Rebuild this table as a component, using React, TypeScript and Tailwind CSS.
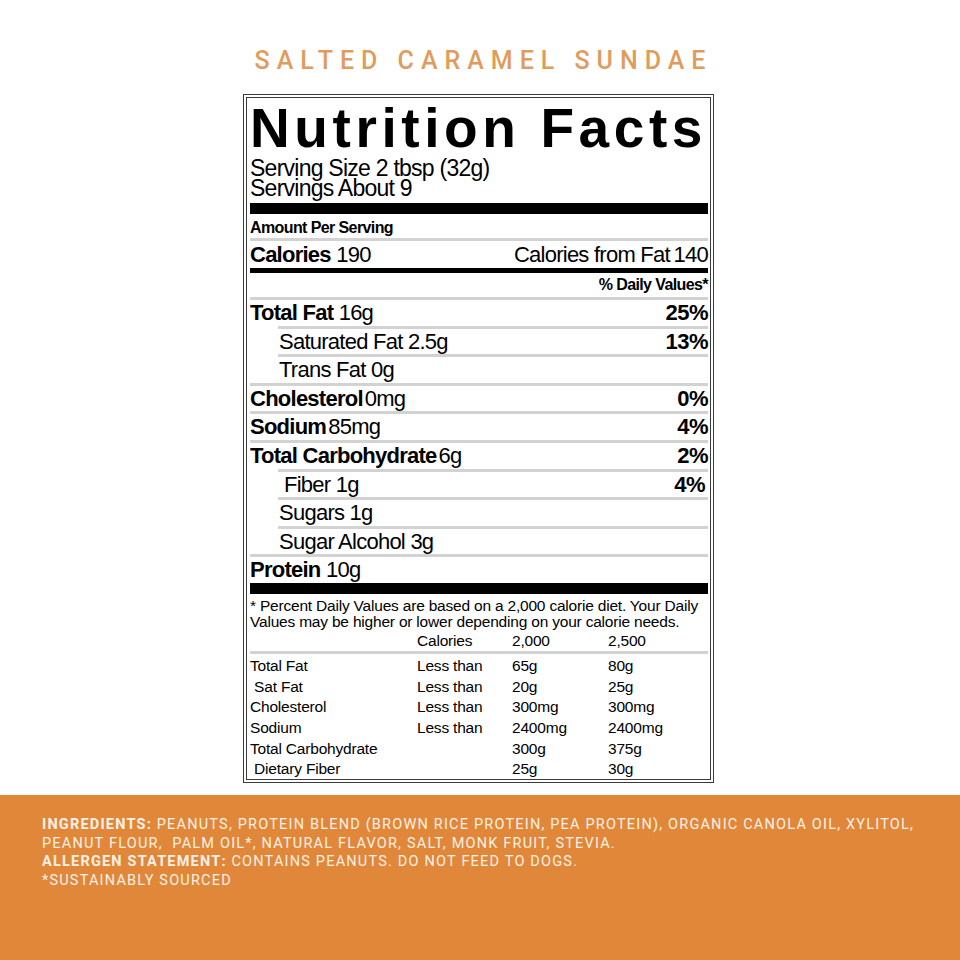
const ARIAL = "font-['Liberation_Sans',Arial,sans-serif]";

type Row = {
  label: string;
  value: string;
  bold?: boolean;
  tight?: boolean;
  indent?: 'sub' | 'fiber';
  pct?: string;
  pctClass?: string;
  lineIndent?: boolean;
};

const rows: Row[] = [
  { label: 'Total Fat', value: '16g', bold: true, pct: '25%', lineIndent: true },
  { label: 'Saturated Fat', value: '2.5g', indent: 'sub', pct: '13%', lineIndent: true },
  { label: 'Trans Fat', value: '0g', indent: 'sub' },
  { label: 'Cholesterol', value: '0mg', bold: true, tight: true, pct: '0%' },
  { label: 'Sodium', value: '85mg', bold: true, tight: true, pct: '4%' },
  { label: 'Total Carbohydrate', value: '6g', bold: true, tight: true, pct: '2%', lineIndent: true },
  { label: 'Fiber', value: '1g', indent: 'fiber', pct: '4%', pctClass: 'pr-[3px]', lineIndent: true },
  { label: 'Sugars', value: '1g', indent: 'sub', lineIndent: true },
  { label: 'Sugar Alcohol', value: '3g', indent: 'sub' },
];

const dv = [
  ['Total Fat', 'Less than', '65g', '80g'],
  ['\u00a0Sat Fat', 'Less than', '20g', '25g'],
  ['Cholesterol', 'Less than', '300mg', '300mg'],
  ['Sodium', 'Less than', '2400mg', '2400mg'],
  ['Total Carbohydrate', '', '300g', '375g'],
  ['\u00a0Dietary Fiber', '', '25g', '30g'],
];

function GrayLine({ indent = false }: { indent?: boolean }) {
  return <div className={`h-[3px] bg-[#d2d2d2] ${indent ? 'ml-[28px]' : ''}`} />;
}

function NutrientRow({ row }: { row: Row }) {
  const pad = row.indent === 'sub' ? 'pl-[29px]' : row.indent === 'fiber' ? 'pl-[34px]' : '';
  return (
    <>
      <div className={`flex h-[25.6px] items-center justify-between text-[22px] leading-[25.6px] tracking-[-0.75px] ${pad}`}>
        <span className="whitespace-nowrap">
          {row.bold ? <b>{row.label}</b> : row.label}
          {row.tight ? <span className="ml-[2px]">{row.value}</span> : ` ${row.value}`}
        </span>
        {row.pct && <b className={`tracking-[-0.5px] ${row.pctClass ?? ''}`}>{row.pct}</b>}
      </div>
      <GrayLine indent={row.lineIndent} />
    </>
  );
}

export default function App() {
  return (
    <div className="min-h-[960px] w-[960px] bg-white">
      <h1 className="pl-[7px] pt-[48px] text-center font-['Roboto',sans-serif] text-[25px] font-medium leading-[25px] tracking-[7px] text-[#e09c5c]">
        SALTED CARAMEL SUNDAE
      </h1>

      {/* Label box */}
      <div className={`ml-[243px] mt-[21px] h-[689px] w-[471px] border border-[#3a3a3a] p-[2px] text-black ${ARIAL}`}>
        <div className="h-full overflow-hidden border border-[#3a3a3a] pl-[3px] pr-[2px]">
          <div className="pt-[6px] text-[55px] font-bold leading-[48px] tracking-[4.6px] whitespace-nowrap">
            Nutrition Facts
          </div>
          <div className="mt-[6px] text-[23px] leading-[20px] tracking-[-0.75px]">
            <div>Serving Size 2 tbsp (32g)</div>
            <div>Servings About 9</div>
          </div>
          <div className="mt-[5px] h-[11px] bg-black" />

          <div className="mt-[6px] text-[16px] font-bold leading-[16px] tracking-[-0.6px]">Amount Per Serving</div>
          <div className="mt-[2px]">
            <GrayLine />
          </div>
          <div className="flex h-[27px] items-center justify-between text-[22px] leading-[27px] tracking-[-0.75px]">
            <span>
              <b>Calories</b> 190
            </span>
            <span>Calories from Fat&thinsp;140</span>
          </div>
          <div className="h-[5px] bg-black" />
          <div className="flex h-[24px] items-center justify-end text-[16px] font-bold leading-[24px] tracking-[-0.6px]">
            % Daily Values*
          </div>
          <GrayLine />

          {rows.map((r) => (
            <NutrientRow key={r.label} row={r} />
          ))}

          <div className="h-[25.6px] text-[22px] leading-[25.6px] tracking-[-0.75px]">
            <b>Protein</b> 10g
          </div>
          <div className="h-[11px] bg-black" />

          {/* Footnote */}
          <div className="mt-[4px] text-[15.5px] leading-[16.5px] tracking-[-0.2px]">
            <div className="whitespace-nowrap">* Percent Daily Values are based on a 2,000 calorie diet. Your Daily</div>
            <div className="whitespace-nowrap">Values may be higher or lower depending on your calorie needs.</div>
            <div className="grid grid-cols-[167px_95px_96px_1fr] leading-[20px]">
              <span />
              <span>Calories</span>
              <span>2,000</span>
              <span>2,500</span>
            </div>
          </div>
          <GrayLine />
          <div className="mt-[2px] text-[15.5px] leading-[20.7px] tracking-[-0.2px]">
            {dv.map((d) => (
              <div key={d[0]} className="grid grid-cols-[167px_95px_96px_1fr] whitespace-nowrap">
                <span>{d[0]}</span>
                <span>{d[1]}</span>
                <span>{d[2]}</span>
                <span>{d[3]}</span>
              </div>
            ))}
          </div>
        </div>
      </div>

      {/* Ingredients band */}
      <div className="mt-[12px] h-[165px] bg-[#e1873a] pl-[42px] pt-[21px] font-['Roboto',sans-serif] text-[14.5px] leading-[18.6px] tracking-[1.2px] text-[#fdf1e6]">
        <div className="whitespace-nowrap">
          <b>INGREDIENTS:</b> PEANUTS, PROTEIN BLEND (BROWN RICE PROTEIN, PEA PROTEIN), ORGANIC CANOLA OIL, XYLITOL,
        </div>
        <div className="whitespace-nowrap">PEANUT FLOUR,&nbsp; PALM OIL*, NATURAL FLAVOR, SALT, MONK FRUIT, STEVIA.</div>
        <div className="whitespace-nowrap">
          <b>ALLERGEN STATEMENT:</b> CONTAINS PEANUTS. DO NOT FEED TO DOGS.
        </div>
        <div className="whitespace-nowrap">*SUSTAINABLY SOURCED</div>
      </div>
    </div>
  );
}
